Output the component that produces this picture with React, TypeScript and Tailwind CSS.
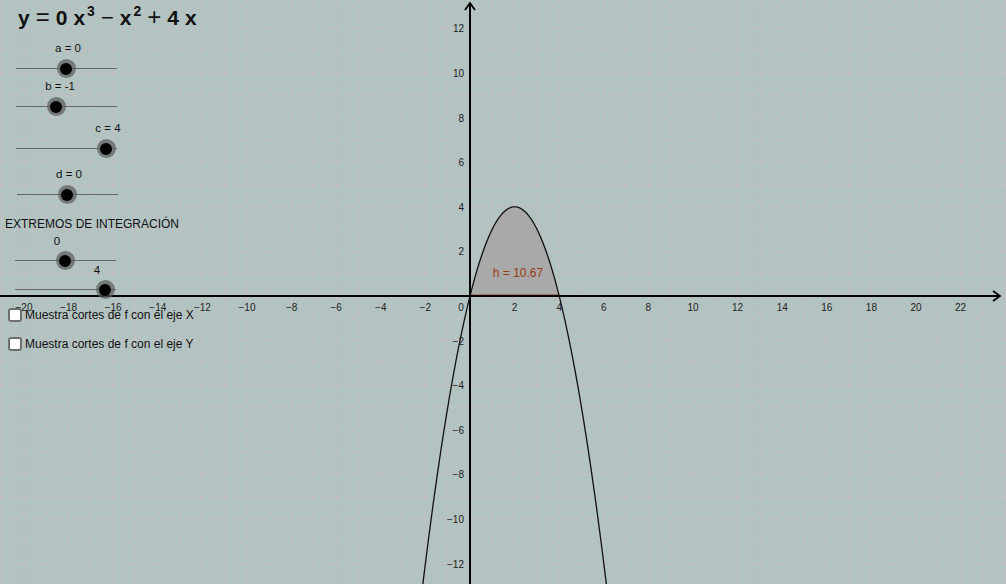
import React from "react";

const OX = 470;
const OY = 296;
const U = 22.3;
const px = (x: number) => OX + x * U;
const py = (y: number) => OY - y * U;

function Slider({ y, x0, x1, knob }: { y: number; x0: number; x1: number; knob: number }) {
  return (
    <>
      <div className="absolute h-px bg-[#666666]" style={{ left: x0, top: y, width: x1 - x0 }} />
      <div
        className="absolute w-[19px] h-[19px] rounded-full bg-[#5a5a5a]/70 flex items-center justify-center"
        style={{ left: knob - 9.5, top: y - 9 }}
      >
        <div className="w-[12px] h-[12px] rounded-full bg-black" />
      </div>
    </>
  );
}

function Label({ x, y, text }: { x: number; y: number; text: string }) {
  return (
    <div
      className="absolute text-[11.5px] leading-none text-[#111] whitespace-nowrap -translate-x-1/2"
      style={{ left: x, top: y }}
    >
      {text}
    </div>
  );
}

function Check({ y, text }: { y: number; text: string }) {
  return (
    <div className="absolute left-[8px] flex items-center gap-[3px]" style={{ top: y }}>
      <div className="w-[14px] h-[14px] bg-white border-2 border-[#6e6e6e] rounded-[3px]" />
      <span className="text-[12px] leading-none text-[#111] whitespace-nowrap">{text}</span>
    </div>
  );
}

export default function App() {
  const vLines: number[] = [];
  for (let k = -22; k <= 25; k++) vLines.push(k);
  const hLines: number[] = [];
  for (let k = -14; k <= 14; k++) hLines.push(k);

  const xLabels: number[] = [];
  for (let k = -20; k <= 22; k += 2) if (k !== 0) xLabels.push(k);
  const yLabels: number[] = [];
  for (let k = -12; k <= 12; k += 2) if (k !== 0) yLabels.push(k);

  const f = (x: number) => -x * x + 4 * x;
  let curve = "";
  for (let i = 0; i <= 200; i++) {
    const x = -2.3 + (8.6 * i) / 200;
    curve += (i === 0 ? "M" : "L") + px(x).toFixed(2) + " " + py(f(x)).toFixed(2) + " ";
  }
  let area = `M${px(0)} ${py(0)} `;
  for (let i = 0; i <= 100; i++) {
    const x = (4 * i) / 100;
    area += `L${px(x).toFixed(2)} ${py(f(x)).toFixed(2)} `;
  }
  area += "Z";

  const minus = (n: number) => (n < 0 ? "\u2212" + Math.abs(n) : String(n));

  return (
    <div
      className="relative w-[1006px] h-[584px] overflow-hidden bg-[#b3c3c1]"
      style={{ fontFamily: '"Liberation Sans", Arial, sans-serif' }}
    >
      <svg className="absolute left-0 top-0" width={1006} height={584}>
        {vLines.map((k) => (
          <line key={"v" + k} x1={px(k)} y1={0} x2={px(k)} y2={584} stroke="#c9bec2" strokeWidth={1} strokeDasharray="5 3" />
        ))}
        {hLines.map((k) => (
          <line key={"h" + k} x1={0} y1={py(k)} x2={1006} y2={py(k)} stroke="#c9bec2" strokeWidth={1} strokeDasharray="5 3" />
        ))}
        <path d={area} fill="#a9a9a9" />
        <line x1={px(0)} y1={OY - 0.5} x2={px(4)} y2={OY - 0.5} stroke="#a0401c" strokeWidth={2} />
        <line x1={0} y1={OY} x2={1000} y2={OY} stroke="#000" strokeWidth={2} />
        <path d={`M993 ${OY - 5} L1000 ${OY} L993 ${OY + 5}`} fill="none" stroke="#000" strokeWidth={1.8} />
        <line x1={OX} y1={584} x2={OX} y2={3} stroke="#000" strokeWidth={2} />
        <path d={`M${OX - 5} 10 L${OX} 3 L${OX + 5} 10`} fill="none" stroke="#000" strokeWidth={1.8} />
        <path d={curve} fill="none" stroke="#111" strokeWidth={1.3} />
        {xLabels.map((k) => (
          <text key={"xl" + k} x={px(k)} y={311} fontSize={10} fill="#222" textAnchor="middle" fontFamily="Liberation Sans, Arial, sans-serif">
            {minus(k)}
          </text>
        ))}
        <text x={461} y={311} fontSize={10} fill="#222" textAnchor="middle" fontFamily="Liberation Sans, Arial, sans-serif">0</text>
        {yLabels.map((k) => (
          <text key={"yl" + k} x={464} y={py(k) + 4} fontSize={10} fill="#222" textAnchor="end" fontFamily="Liberation Sans, Arial, sans-serif">
            {minus(k)}
          </text>
        ))}
        <text x={518} y={277} fontSize={12} fill="#9a3a12" textAnchor="middle" fontFamily="Liberation Sans, Arial, sans-serif">h = 10.67</text>
      </svg>

      <div className="absolute left-[18px] top-[4px] flex items-baseline gap-[6px] text-[21px] font-bold leading-[26px] text-[#111] whitespace-nowrap">
        <span>y</span>
        <span className="text-[24px] font-normal">=</span>
        <span>0</span>
        <span>
          x<sup className="text-[14px] ml-[2px] top-[-9px]">3</sup>
        </span>
        <span className="text-[22px] font-normal">−</span>
        <span>
          x<sup className="text-[14px] ml-[2px] top-[-9px]">2</sup>
        </span>
        <span className="text-[24px] font-normal">+</span>
        <span>4</span>
        <span>x</span>
      </div>

      <Label x={68} y={43} text="a = 0" />
      <Slider y={68} x0={16} x1={117} knob={66} />
      <Label x={60} y={81} text="b = -1" />
      <Slider y={106} x0={16} x1={117} knob={56} />
      <Label x={108} y={123} text="c = 4" />
      <Slider y={148} x0={16} x1={117} knob={106} />
      <Label x={69} y={169} text="d = 0" />
      <Slider y={194} x0={17} x1={118} knob={67} />

      <div className="absolute left-[5px] top-[218px] text-[12px] leading-none text-[#111] whitespace-nowrap">
        EXTREMOS DE INTEGRACIÓN
      </div>
      <Label x={57} y={236} text="0" />
      <Slider y={260} x0={15} x1={116} knob={65} />
      <Label x={97} y={265} text="4" />
      <Slider y={289} x0={15} x1={116} knob={105} />

      <Check y={308} text="Muestra cortes de f con el eje X" />
      <Check y={337} text="Muestra cortes de f con el eje Y" />
    </div>
  );
}
